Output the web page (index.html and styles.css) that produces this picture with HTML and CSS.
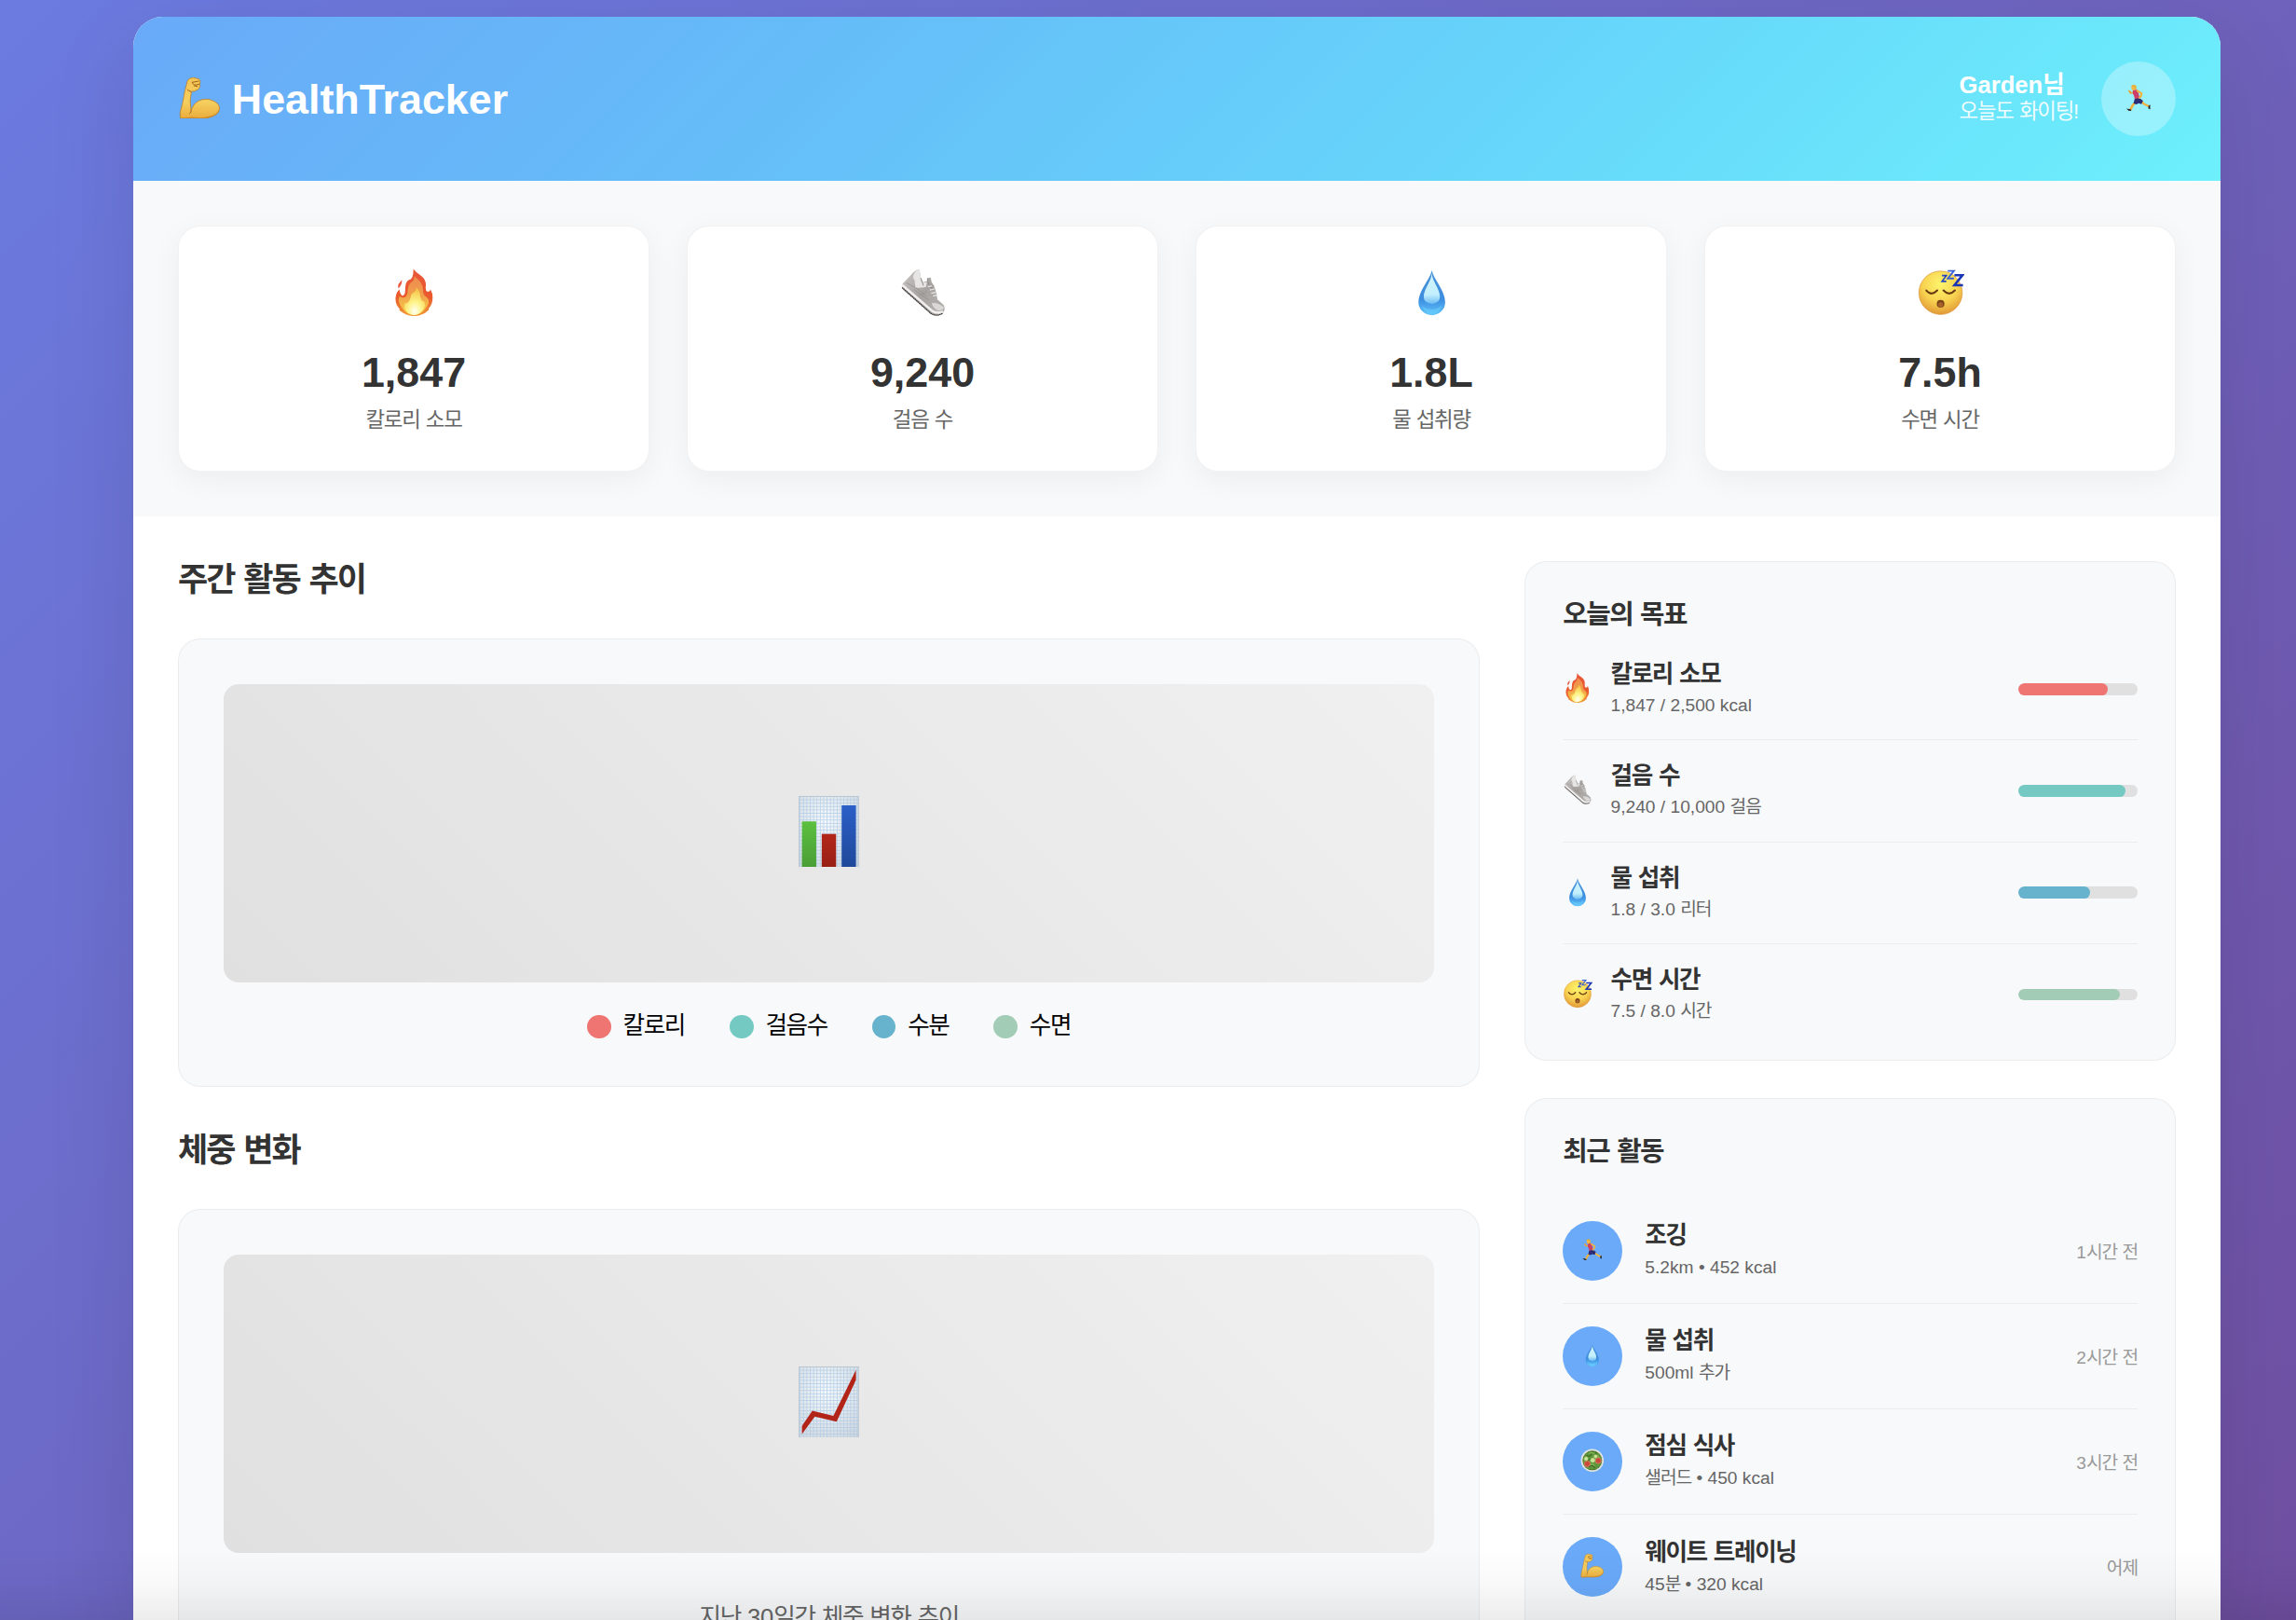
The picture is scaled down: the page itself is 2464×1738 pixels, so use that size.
FILE: index.html
```html
<!DOCTYPE html>
<html lang="ko">
<head>
<meta charset="utf-8">
<title>HealthTracker</title>
<link rel="stylesheet" href="styles.css">
</head>
<body>
<svg class="sprite" aria-hidden="true">
  <defs>
    <linearGradient id="skin" x1="0" y1="0" x2="0" y2="1"><stop offset="0" stop-color="#f3c455"/><stop offset=".6" stop-color="#f5ce5f"/><stop offset="1" stop-color="#e9ac3c"/></linearGradient>
    <linearGradient id="flame" x1="0" y1="0" x2="0" y2="1"><stop offset="0" stop-color="#e8553a"/><stop offset=".6" stop-color="#ea5a2c"/><stop offset="1" stop-color="#f09a38"/></linearGradient>
    <linearGradient id="flame2" x1="0" y1="0" x2="0" y2="1"><stop offset="0" stop-color="#ee8a50"/><stop offset=".5" stop-color="#f1a04a"/><stop offset="1" stop-color="#f8d84a"/></linearGradient>
    <radialGradient id="core" cx=".5" cy=".85" r=".75"><stop offset="0" stop-color="#fffff4"/><stop offset=".45" stop-color="#fdf48a"/><stop offset="1" stop-color="#f6c84c"/></radialGradient>
    <linearGradient id="water" x1="0" y1="0" x2="0" y2="1"><stop offset="0" stop-color="#4a93d6"/><stop offset=".65" stop-color="#3d8ee0"/><stop offset="1" stop-color="#62c4fb"/></linearGradient>
    <linearGradient id="shine" x1="0" y1="0" x2="0" y2="1"><stop offset="0" stop-color="#d3f3fc"/><stop offset=".7" stop-color="#c2effd"/><stop offset="1" stop-color="#6dbcf3"/></linearGradient>
    <radialGradient id="face" cx=".5" cy=".3" r=".75"><stop offset="0" stop-color="#fdf56c"/><stop offset=".55" stop-color="#f8d250"/><stop offset="1" stop-color="#dd8f33"/></radialGradient>
    <linearGradient id="shoeg" x1="0" y1="0" x2="1" y2="1"><stop offset="0" stop-color="#c9c7c5"/><stop offset=".5" stop-color="#a6a3a0"/><stop offset="1" stop-color="#b5b2af"/></linearGradient>
    <radialGradient id="paper" cx=".45" cy=".35" r=".8"><stop offset="0" stop-color="#f6fafc"/><stop offset="1" stop-color="#cfd6dc"/></radialGradient>
    <pattern id="grid" width="4.7" height="4.7" patternUnits="userSpaceOnUse"><path d="M0 .6H4.7M.6 0V4.7" stroke="#a8c8e6" stroke-width="1" opacity=".8"/></pattern>
    <linearGradient id="gbar" x1="0" y1="0" x2="0" y2="1"><stop offset="0" stop-color="#5bc040"/><stop offset="1" stop-color="#4a9d36"/></linearGradient>
    <linearGradient id="rbar" x1="0" y1="0" x2="0" y2="1"><stop offset="0" stop-color="#b3261a"/><stop offset="1" stop-color="#981f15"/></linearGradient>
    <linearGradient id="bbar" x1="0" y1="0" x2="0" y2="1"><stop offset="0" stop-color="#2b60c8"/><stop offset="1" stop-color="#1f4899"/></linearGradient>
  </defs>
  <symbol id="arm" viewBox="0 0 100 100">
    <path d="M20 10Q20 6 26 3L34 0L48 4Q53 8 50 16Q52 24 46 29Q38 34 30 34L27 56L29 79Q36 58 56 53Q72 49 86 58Q99 66 97 77Q94 89 76 95Q56 101 31 97Q14 100 5 99Q2 97 3 84L9 60L14 33Q17 22 20 10Z" fill="url(#skin)" stroke="#b97a22" stroke-width="1.6"/>
    <path d="M29 79Q31 84 25 87M30 34Q24 34 20 29M31 12L48 9M33 12Q32 19 42 18L50 16M36 20L45 22" fill="none" stroke="#9c5e16" stroke-width="2.2"/>
    <path d="M5 97Q16 99 31 96Q56 100 76 94Q92 89 96 79" fill="none" stroke="#cf8a28" stroke-width="2.5"/>
  </symbol>
  <symbol id="fire" viewBox="0 0 100 100">
    <path d="M48 1Q54 9 64 15Q76 24 74 38Q73 47 78 49Q83 49 84 44Q90 54 88 67Q87 77 80 84Q82 87 78 89Q68 99 50 100Q32 99 22 90Q16 88 20 86Q9 74 11 60Q12 50 19 44Q20 54 25 57Q31 57 31 45Q31 27 39 24Q49 22 48 1Z" fill="url(#flame)"/>
    <path d="M24 24Q25 33 17 42Q14 34 20 29Z" fill="#e8573f"/>
    <path d="M50 16Q68 29 68 43Q68 56 76 60Q86 70 72 86Q64 96 50 98Q35 97 26 85Q13 68 19 58Q32 67 36 51Q36 35 44 29Q50 25 50 16Z" fill="url(#flame2)"/>
    <path d="M54 40Q62 46 63 60Q65 68 70 69Q76 76 68 87Q61 97 50 98Q37 97 32 88Q27 79 31 73Q38 74 42 62Q43 53 49 50Q55 46 54 40Z" fill="url(#core)"/>
  </symbol>
  <symbol id="shoe" viewBox="0 0 100 100">
    <path d="M37 3L42 2Q44 6 45 21L50 29L58 27L59 20L66 19L68 29L73 36L78 52L80 65L93 76Q97 84 94 90Q89 98 81 98Q74 99 67 95L8 45L6 37Q7 30 14 25L30 8Z" fill="url(#shoeg)"/>
    <path d="M37 3L42 2Q44 8 45 20L52 30L58 29L56 39Q44 41 34 40L32 24Q27 20 31 11Z" fill="#e6e5e4"/>
    <path d="M45 20L51 36M59 21L62 34L70 44" stroke="#8f8c89" stroke-width="2" fill="none"/>
    <path d="M60 38L68 37M64 45L74 43M67 52L77 50M71 58L79 56" stroke="#e8e8e7" stroke-width="2.4"/>
    <path d="M15 30L34 40L56 57M31 44L46 56L57 48M42 53L62 66" stroke="#96928f" stroke-width="1.6" fill="none"/>
    <path d="M68 73Q80 70 94 82Q91 89 81 88Q71 84 68 73Z" fill="#d9d8d6"/>
    <path d="M6 35Q12 39 18 45L69 89Q79 95 92 91" fill="none" stroke="#f0efee" stroke-width="5"/>
    <path d="M6 40L66 94Q78 102 91 94" fill="none" stroke="#383634" stroke-width="2.6" stroke-dasharray="3 1"/>
  </symbol>
  <symbol id="drop" viewBox="0 0 100 100">
    <path d="M50 4C53 22 78 46 78 71A28 27 0 0 1 22 71C22 46 47 22 50 4Z" fill="url(#water)"/>
    <path d="M50 10C51 28 67 43 67 60A17 14 0 0 1 33 60C33 43 49 28 50 10Z" fill="url(#shine)"/>
    <path d="M29 78Q50 94 71 78Q65 95 50 96Q35 95 29 78Z" fill="#67cffc" opacity=".6"/>
  </symbol>
  <symbol id="sleep" viewBox="0 0 100 100">
    <circle cx="50" cy="51" r="45.5" fill="url(#face)" stroke="#d98e30" stroke-width="1.2"/>
    <path d="M20 46Q31 59 43 46M56 46Q68 59 80 46" fill="none" stroke="#6b3c12" stroke-width="4" stroke-linecap="round"/>
    <ellipse cx="50" cy="74" rx="8" ry="8" fill="#7a4418"/><ellipse cx="50" cy="76" rx="5" ry="5" fill="#a8622a"/>
    <path d="M53 15H62L53 27H62" fill="none" stroke="#2344c4" stroke-width="3.2"/>
    <path d="M65 5H78L65 21H78" fill="none" stroke="#3a62d4" stroke-width="3.6"/>
    <path d="M79 14H96L79 35H97" fill="none" stroke="#1c37b5" stroke-width="5"/>
  </symbol>
  <symbol id="runner" viewBox="0 0 100 100">
    <path d="M39 31L24 34L19 27" fill="none" stroke="#eaa63a" stroke-width="6" stroke-linejoin="round" stroke-linecap="round"/>
    <path d="M46 59L31 74L22 91" fill="none" stroke="#efb03c" stroke-width="8" stroke-linejoin="round"/>
    <path d="M55 57L68 70L88 80" fill="none" stroke="#f0b440" stroke-width="7" stroke-linejoin="round"/>
    <path d="M9 86L24 88L26 93L18 94Z" fill="#25262c"/><path d="M83 77L89 73L89 88L83 86Z" fill="#25262c"/>
    <path d="M31 25Q38 19 47 24L54 50L38 57Q35 40 31 37Z" fill="#cc3f66"/>
    <path d="M37 54L53 51L65 59L60 71L50 68L43 72L33 69Z" fill="#2c2c74"/>
    <path d="M46 26L60 35L59 43L53 49" fill="none" stroke="#f0b440" stroke-width="6.5" stroke-linejoin="round" stroke-linecap="round"/>
    <ellipse cx="34" cy="16" rx="8" ry="9" fill="#f1b649"/><path d="M24 11Q31 3 40 8Q45 12 41 23Q37 17 36 12Z" fill="#e5ad32"/>
  </symbol>
  <symbol id="salad" viewBox="0 0 100 100">
    <circle cx="50" cy="50" r="48" fill="#dfe3df"/><circle cx="50" cy="50" r="41" fill="#4d7a2f"/>
    <path d="M16 36Q30 8 50 17Q70 8 84 29Q96 52 82 70Q69 90 50 85Q28 91 17 70Q8 54 16 36Z" fill="#5f963a"/>
    <path d="M25 28Q40 38 47 22M66 15Q63 35 80 34M35 78Q53 64 60 83M20 48Q33 56 40 42" stroke="#3f6b28" stroke-width="5" fill="none"/>
    <path d="M37 22Q48 12 56 23M60 31Q72 24 80 39M40 69Q51 61 59 72" stroke="#8ab659" stroke-width="5" fill="none"/>
    <g fill="#c94a3a" stroke="#e57d62" stroke-width="3"><circle cx="29" cy="64" r="12"/><circle cx="75" cy="51" r="12"/></g>
    <g fill="#cde49a" stroke="#7daa4d" stroke-width="2"><circle cx="24" cy="43" r="9"/><circle cx="52" cy="49" r="10"/><circle cx="64" cy="33" r="8"/></g>
  </symbol>
  <symbol id="bars" viewBox="0 0 100 100">
    <rect x="8" y="0" width="84" height="100" fill="url(#paper)"/><rect x="8" y="0" width="84" height="100" fill="url(#grid)"/><rect x="8.5" y=".5" width="83" height="99" fill="none" stroke="#b9c4cd"/>
    <rect x="12.5" y="35.5" width="20" height="64" fill="url(#gbar)"/><rect x="40.2" y="53" width="20" height="46.5" fill="url(#rbar)"/><rect x="68" y="13" width="20" height="86.5" fill="url(#bbar)"/>
  </symbol>
  <symbol id="trend" viewBox="0 0 100 100">
    <rect x="8" y="0" width="84" height="100" fill="url(#paper)"/><rect x="8" y="0" width="84" height="100" fill="url(#grid)"/><rect x="8.5" y=".5" width="83" height="99" fill="none" stroke="#b9c4cd"/>
    <path d="M12.6 83L27 62L56.5 69L88 5V19L61 77L30.5 70L12.6 94.5Z" fill="#b32418"/>
  </symbol>
</svg>

<div class="container">
  <header class="header">
    <div class="logo"><svg class="logo-icon"><use href="#arm"/></svg><span>HealthTracker</span></div>
    <div class="user">
      <div>
        <div class="user-name">Garden<span class="ko">님</span></div>
        <div class="user-msg ko">오늘도 화이팅!</div>
      </div>
      <div class="avatar"><svg class="avatar-icon"><use href="#runner"/></svg></div>
    </div>
  </header>

  <section class="stats">
    <div class="stat"><svg class="stat-icon"><use href="#fire"/></svg><div class="stat-value">1,847</div><div class="stat-label ko">칼로리 소모</div></div>
    <div class="stat"><svg class="stat-icon"><use href="#shoe"/></svg><div class="stat-value">9,240</div><div class="stat-label ko">걸음 수</div></div>
    <div class="stat"><svg class="stat-icon"><use href="#drop"/></svg><div class="stat-value">1.8L</div><div class="stat-label ko">물 섭취량</div></div>
    <div class="stat"><svg class="stat-icon"><use href="#sleep"/></svg><div class="stat-value">7.5h</div><div class="stat-label ko">수면 시간</div></div>
  </section>

  <main class="main">
    <div class="charts">
      <h2 class="section-title ko">주간 활동 추이</h2>
      <div class="chart-card">
        <div class="placeholder"><svg class="chart-icon"><use href="#bars"/></svg></div>
        <div class="legend">
          <div class="legend-item"><i class="dot red"></i><span class="ko">칼로리</span></div>
          <div class="legend-item"><i class="dot teal"></i><span class="ko">걸음수</span></div>
          <div class="legend-item"><i class="dot blue"></i><span class="ko">수분</span></div>
          <div class="legend-item"><i class="dot green"></i><span class="ko">수면</span></div>
        </div>
      </div>
      <h2 class="section-title ko">체중 변화</h2>
      <div class="chart-card">
        <div class="placeholder"><svg class="chart-icon"><use href="#trend"/></svg></div>
        <p class="caption"><span class="ko">지난 </span>30<span class="ko">일간 체중 변화 추이</span></p>
      </div>
    </div>

    <aside class="side">
      <div class="card">
        <h3 class="card-title ko">오늘의 목표</h3>
        <div class="goal"><svg class="goal-icon"><use href="#fire"/></svg><div class="info"><div class="name ko">칼로리 소모</div><div class="detail">1,847 / 2,500 kcal</div></div><div class="bar"><div class="fill red" style="width:75%"></div></div></div>
        <div class="goal"><svg class="goal-icon"><use href="#shoe"/></svg><div class="info"><div class="name ko">걸음 수</div><div class="detail">9,240 / 10,000 <span class="ko">걸음</span></div></div><div class="bar"><div class="fill teal" style="width:90%"></div></div></div>
        <div class="goal"><svg class="goal-icon"><use href="#drop"/></svg><div class="info"><div class="name ko">물 섭취</div><div class="detail">1.8 / 3.0 <span class="ko">리터</span></div></div><div class="bar"><div class="fill blue" style="width:60%"></div></div></div>
        <div class="goal"><svg class="goal-icon"><use href="#sleep"/></svg><div class="info"><div class="name ko">수면 시간</div><div class="detail">7.5 / 8.0 <span class="ko">시간</span></div></div><div class="bar"><div class="fill green" style="width:85%"></div></div></div>
      </div>

      <div class="card">
        <h3 class="card-title recent ko">최근 활동</h3>
        <div class="activity"><div class="badge"><svg class="badge-icon"><use href="#runner"/></svg></div><div class="info"><div class="name ko">조깅</div><div class="detail">5.2km • 452 kcal</div></div><div class="time">1<span class="ko">시간 전</span></div></div>
        <div class="activity"><div class="badge"><svg class="badge-icon"><use href="#drop"/></svg></div><div class="info"><div class="name ko">물 섭취</div><div class="detail">500ml <span class="ko">추가</span></div></div><div class="time">2<span class="ko">시간 전</span></div></div>
        <div class="activity"><div class="badge"><svg class="badge-icon"><use href="#salad"/></svg></div><div class="info"><div class="name ko">점심 식사</div><div class="detail"><span class="ko">샐러드</span> • 450 kcal</div></div><div class="time">3<span class="ko">시간 전</span></div></div>
        <div class="activity"><div class="badge"><svg class="badge-icon"><use href="#arm"/></svg></div><div class="info"><div class="name ko">웨이트 트레이닝</div><div class="detail">45<span class="ko">분</span> • 320 kcal</div></div><div class="time ko">어제</div></div>
      </div>
    </aside>
  </main>
</div>
</body>
</html>
```
FILE: styles.css
```css
* { box-sizing: border-box; margin: 0; padding: 0; }
html { height: 1738px; overflow: hidden; }
body {
  height: 1738px;
  overflow: hidden;
  padding: 18px 81px 0 143px;
  font-family: "Liberation Sans", "Noto Sans CJK KR", sans-serif;
  font-size: 25.6px;
  color: #000;
  background: linear-gradient(135deg, #6b7be0, #704d9e) 0 -14px / 2464px 1950px no-repeat #704d9e;
}
/* soft shade along the bottom edge of the window */
body::after {
  content: "";
  position: fixed;
  left: 0; right: 0; bottom: 0;
  height: 76px;
  background: linear-gradient(to bottom, rgba(0,0,0,0), rgba(0,0,0,.025) 50%, rgba(0,0,0,.075));
}
svg { display: block; flex: none; }
.sprite { position: absolute; width: 0; height: 0; }
.ko { letter-spacing: -.055em; word-spacing: .055em; }

.container {
  width: 2240px;
  height: 1720px;
  background: #fff;
  border-radius: 32px 32px 0 0;
  overflow: hidden;
  box-shadow: 0 32px 96px rgba(0,0,0,.1);
}
.header {
  height: 176px;
  padding: 0 48px;
  display: flex;
  align-items: center;
  justify-content: space-between;
  color: #fff;
  background: linear-gradient(135deg, #69aaf8, #65bbf8 30%, #66d5fa 65%, #6df0fc);
}
.logo { display: flex; align-items: center; gap: 12px; font-size: 44.8px; font-weight: 700; line-height: 52px; }
.logo-icon { width: 44.8px; height: 44.8px; margin-left: 1px; margin-top: -2px; }
.logo span { margin-top: -1px; }
.user { display: flex; align-items: center; gap: 25px; }
.user-name { font-weight: 700; line-height: 30px; height: 30px; margin-top: -3px; }
.user-msg { font-size: 22.4px; line-height: 28px; opacity: .9; }
.avatar { width: 80px; height: 80px; border-radius: 50%; background: rgba(255,255,255,.3); display: flex; align-items: center; justify-content: center; }
.avatar-icon { width: 32px; height: 32px; margin-top: -3px; }

.stats {
  height: 359.6px;
  padding: 48px;
  display: grid;
  grid-template-columns: repeat(4, 1fr);
  gap: 40px;
  background: #f8f9fb;
}
.stat {
  padding-top: 45px;
  display: flex;
  flex-direction: column;
  align-items: center;
  background: #fff;
  border: 1px solid rgba(0,0,0,.05);
  border-radius: 24px;
  box-shadow: 0 8px 32px rgba(0,0,0,.05);
}
.stat-icon { width: 51.2px; height: 51.2px; margin-left: 1px; }
.stat-value { margin-top: 34px; font-size: 44.8px; line-height: 52px; font-weight: 700; color: #333; }
.stat-label { margin-top: 10px; font-size: 22.4px; line-height: 32px; color: #666; }

.main { padding: 48px; display: grid; grid-template-columns: 2fr 1fr; gap: 48px; align-items: start; }
.section-title { font-size: 35px; line-height: 38px; color: #333; padding-top: 1px; margin-bottom: 44.4px; }
.chart-card {
  height: 481px;
  margin-bottom: 47.6px;
  padding: 48px;
  background: #f8f9fb;
  border: 1px solid rgba(0,0,0,.05);
  border-radius: 24px;
}
.placeholder {
  height: 320px;
  border-radius: 16px;
  background: linear-gradient(45deg, #e0e0e0, #f0f0f0);
  display: flex;
  align-items: center;
  justify-content: center;
}
.chart-icon { width: 76.8px; height: 76.8px; margin-top: -4px; }
.legend { margin-top: 32px; height: 31px; display: flex; justify-content: center; align-items: center; gap: 48px; }
.legend-item { display: flex; align-items: center; gap: 12.8px; line-height: 31px; }
.legend-item span { margin-top: -2px; }
.dot { width: 25.6px; height: 25.6px; border-radius: 50%; }
.red { background: #ee7572; }
.teal { background: #74cac3; }
.blue { background: #67b3ce; }
.green { background: #a2ccb6; }
.caption { margin-top: 52px; text-align: center; color: #666; line-height: 34px; }

.card {
  padding: 40px;
  margin-bottom: 40px;
  background: #f8f9fb;
  border: 1px solid rgba(0,0,0,.05);
  border-radius: 24px;
}
.card-title { font-size: 28.8px; line-height: 32px; color: #333; margin-bottom: 10.6px; }
.card-title.recent { margin-bottom: 34.4px; }
.goal { height: 109.2px; display: flex; align-items: center; border-bottom: 1px solid rgba(0,0,0,.05); }
.goal:last-child { height: 84.4px; border: 0; padding-top: 24px; }
.goal-icon { width: 32px; height: 32px; margin-right: 19.2px; margin-top: -2px; }
.info { flex: 1; }
.name { font-weight: 700; line-height: 32px; color: #333; }
.detail { font-size: 19.2px; line-height: 28px; color: #666; margin-top: 4px; }
.bar { width: 128px; height: 12.8px; border-radius: 6.4px; background: #e0e0e0; overflow: hidden; }
.fill { height: 100%; border-radius: 6.4px; }
.activity { height: 113px; display: flex; align-items: center; border-bottom: 1px solid rgba(0,0,0,.05); }
.activity:last-child { border: 0; }
.activity .detail { margin-top: 5px; }
.badge { width: 64px; height: 64px; margin-right: 24px; border-radius: 50%; background: #6aaaf9; display: flex; align-items: center; justify-content: center; }
.badge-icon { width: 25.6px; height: 25.6px; margin-top: -2px; margin-right: 2px; }
.time { font-size: 19.2px; color: #999; }
```
